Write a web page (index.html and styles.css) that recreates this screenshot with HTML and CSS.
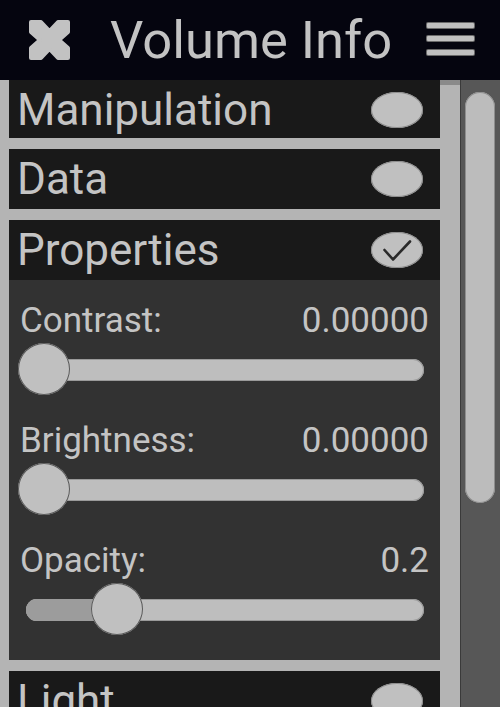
FILE: index.html
```html
<!DOCTYPE html>
<html>
<head>
<meta charset="utf-8">
<link rel="stylesheet" href="styles.css">
</head>
<body>
<div class="app">
  <header class="topbar">
    <svg class="close" width="41" height="40" viewBox="0 0 41 40">
      <polygon points="2,2 12,2 20.5,11 29,2 39,2 39,12 30,20 39,28 39,38 29,38 20.5,29 12,38 2,38 2,28 11,20 2,12" fill="#c2c2c2" stroke="#c2c2c2" stroke-width="4" stroke-linejoin="round"/>
    </svg>
    <h1 class="title">Volume Info</h1>
    <div class="menu">
      <span class="bar"></span>
      <span class="bar"></span>
      <span class="bar"></span>
    </div>
  </header>
  <div class="main">
    <div class="panels">
      <div class="list">
        <section class="row first">
          <span class="row-title">Manipulation</span>
          <span class="toggle"></span>
        </section>
        <section class="row">
          <span class="row-title">Data</span>
          <span class="toggle"></span>
        </section>
        <div class="group">
          <section class="row">
            <span class="row-title">Properties</span>
            <span class="toggle">
              <svg width="52" height="36" viewBox="0 0 52 36">
                <polyline points="13.5,18 22,27.5 39,9.5" fill="none" stroke="#2a2a2a" stroke-width="2.6" stroke-linecap="round" stroke-linejoin="round"/>
              </svg>
            </span>
          </section>
          <div class="props">
            <div class="field">
              <div class="field-head"><span>Contrast:</span><span>0.00000</span></div>
              <div class="slider">
                <div class="track"></div>
                <div class="fill" style="width:0px"></div>
                <div class="knob" style="left:-2px"></div>
              </div>
            </div>
            <div class="field">
              <div class="field-head"><span>Brightness:</span><span>0.00000</span></div>
              <div class="slider">
                <div class="track"></div>
                <div class="fill" style="width:0px"></div>
                <div class="knob" style="left:-2px"></div>
              </div>
            </div>
            <div class="field">
              <div class="field-head"><span>Opacity:</span><span>0.2</span></div>
              <div class="slider">
                <div class="track"></div>
                <div class="fill" style="width:80px"></div>
                <div class="knob" style="left:71px"></div>
              </div>
            </div>
          </div>
        </div>
        <section class="row">
          <span class="row-title">Light</span>
          <span class="toggle"></span>
        </section>
      </div>
    </div>
    <div class="gutter"></div>
    <div class="scroll">
      <div class="thumb"></div>
    </div>
  </div>
</div>
</body>
</html>
```

FILE: styles.css
```css
html, body {
  margin: 0;
  padding: 0;
  background: #b4b4b4;
}

.app {
  width: 500px;
  height: 707px;
  overflow: hidden;
  font-family: Roboto, "Liberation Sans", sans-serif;
  color: #c4c4c4;
}

.topbar {
  height: 80px;
  background: #05050f;
  display: flex;
  align-items: center;
  padding: 0 26px 0 29px;
  box-sizing: border-box;
}

.close {
  display: block;
  flex: none;
}

.title {
  flex: 1;
  margin: 0 0 0 40px;
  font-size: 52.5px;
  font-weight: 400;
  line-height: 60px;
  color: #c3c3c3;
  white-space: nowrap;
}

.menu {
  width: 47px;
  display: flex;
  flex-direction: column;
  gap: 8.5px;
  margin-top: -3px;
}

.bar {
  display: block;
  height: 5px;
  background: #c0c0c0;
  box-shadow: 0 0 0 1px #6a6a6a;
  border-radius: 1px;
}

.main {
  display: flex;
  height: 627px;
  overflow: hidden;
}

.panels {
  width: 440px;
  flex: none;
  background: #b4b4b4;
  padding: 0 0 0 9px;
  box-sizing: border-box;
  overflow: hidden;
}

.list {
  display: flex;
  flex-direction: column;
  gap: 11px;
  margin-top: -2px;
}

.row {
  height: 60px;
  background: #191919;
  display: flex;
  align-items: center;
  justify-content: space-between;
  padding: 0 17px 0 8px;
  box-sizing: border-box;
}

.row.first {
  padding-top: 3px;
}

.row-title {
  font-size: 44px;
  line-height: 52px;
  color: #c4c4c4;
  white-space: nowrap;
}

.toggle {
  width: 52px;
  height: 36px;
  border-radius: 50%;
  background: #c0c0c0;
  box-shadow: inset 0 0 0 1px #8c8c8c;
  display: block;
  flex: none;
}

.toggle svg {
  display: block;
}

.group {
  display: flex;
  flex-direction: column;
}

.props {
  background: #323232;
  padding: 21px 11px 23px 11px;
  height: 380px;
  box-sizing: border-box;
}

.field {
  margin-bottom: 24px;
}

.field:last-child {
  margin-bottom: 0;
}

.field-head {
  display: flex;
  justify-content: space-between;
  font-size: 35px;
  line-height: 40px;
  color: #c4c4c4;
}

.slider {
  position: relative;
  height: 56px;
}

.track {
  position: absolute;
  left: 6px;
  right: 5px;
  top: 18px;
  height: 22px;
  border-radius: 11px;
  background: #bebebe;
  box-shadow: inset 0 0 0 1px #9a9a9a;
}

.fill {
  position: absolute;
  left: 6px;
  top: 18px;
  height: 22px;
  border-radius: 11px 0 0 11px;
  background: #9c9c9c;
}

.knob {
  position: absolute;
  top: 2px;
  width: 52px;
  height: 52px;
  border-radius: 50%;
  background: #c0c0c0;
  box-shadow: inset 0 0 0 1px #5a5a5a;
  box-sizing: border-box;
}

.gutter {
  width: 20px;
  flex: none;
  background: #b4b4b4;
  border-top: 5px solid #8a8a8a;
  box-sizing: border-box;
}

.scroll {
  flex: 1;
  background: #575757;
  border-left: 1px solid #3a3a3a;
  padding: 12px 5px 0 4px;
  box-sizing: border-box;
}

.thumb {
  height: 411px;
  border-radius: 15px;
  background: #bcbcbc;
  box-shadow: inset 0 0 0 1px #8e8e8e;
}
```
